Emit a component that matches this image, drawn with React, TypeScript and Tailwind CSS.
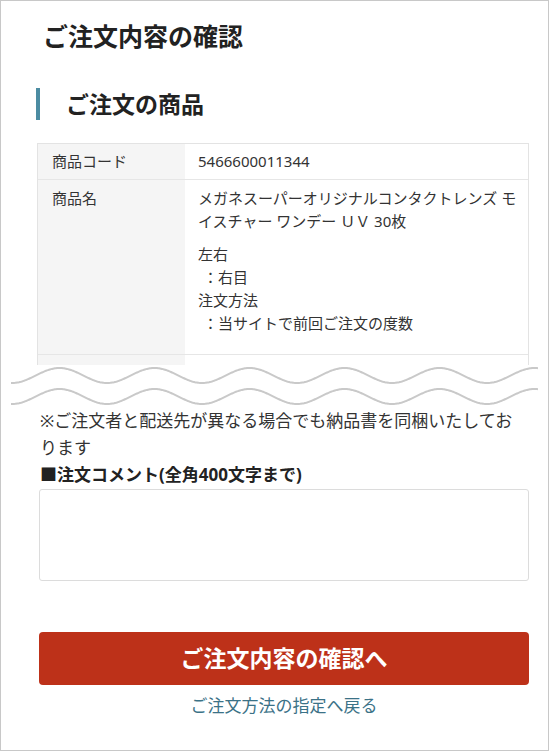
import React from 'react'

const wavePoints = (c: number) => {
  const pts: string[] = []
  for (let x = 0; x <= 527; x += 1) {
    const px = x + 11
    const y = c + 7.5 * Math.cos((2 * Math.PI * (px - 12)) / 95)
    pts.push(`${x},${y.toFixed(2)}`)
  }
  return pts.join(' ')
}

function Wave() {
  return (
    <svg width="527" height="42" viewBox="0 0 527 42" className="block -ml-[26px]">
      <polyline points={wavePoints(10.5)} fill="none" stroke="#c9c9c9" strokeWidth="2" />
      <polyline points={wavePoints(31.5)} fill="none" stroke="#c9c9c9" strokeWidth="2" />
    </svg>
  )
}

export default function App() {
  return (
    <div
      className="w-[549px] h-[751px] border border-[#c8c8c8] bg-white text-[#333]"
      style={{ fontFamily: '"Noto Sans", "Noto Sans CJK JP", sans-serif' }}
    >
      <div className="pl-[36px] pr-[19px]">
        <h1 className="pt-[19px] pl-[6px] text-[25px] leading-[32px] font-bold text-[#222]">
          ご注文内容の確認
        </h1>

        <h2 className="mt-[36px] -ml-[1px] h-[32px] border-l-[4px] border-[#4c8ca2] pl-[26px] text-[23px] leading-[32px] font-bold text-[#222]">
          ご注文の商品
        </h2>

        <div className="mt-[23px] h-[222px] overflow-hidden border-t border-l border-r border-[#e3e3e3] text-[15px] leading-[23px]">
          <div className="flex border-b border-[#e6e6e6]">
            <div className="w-[147px] shrink-0 bg-[#f5f5f5] pl-[14px] py-[6px]">商品コード</div>
            <div className="flex-1 pl-[13px] py-[6px]">5466600011344</div>
          </div>
          <div className="flex border-b border-[#e6e6e6]">
            <div className="w-[147px] shrink-0 bg-[#f5f5f5] pl-[14px] pt-[7px]">商品名</div>
            <div className="flex-1 pl-[13px] pr-[8px] pt-[7px] pb-[19px]">
              <p>メガネスーパーオリジナルコンタクトレンズ モイスチャー ワンデー ＵＶ 30枚</p>
              <div className="mt-[10px]">
                <p>左右</p>
                <p className="pl-[5px]">：右目</p>
                <p>注文方法</p>
                <p className="pl-[5px]">：当サイトで前回ご注文の度数</p>
              </div>
            </div>
          </div>
          <div className="flex h-[40px]">
            <div className="w-[147px] shrink-0 bg-[#f5f5f5]"></div>
            <div className="flex-1"></div>
          </div>
        </div>

        <Wave />

        <div className="pl-[3px] text-[17px] leading-[27px]">
          <p>※ご注文者と配送先が異なる場合でも納品書を同梱いたしております</p>
          <p className="font-bold text-[#222]">■注文コメント(全角400文字まで)</p>
        </div>

        <textarea className="mt-[1px] ml-[2px] block w-[490px] h-[92px] rounded-[3px] border border-[#dcdcdc] resize-none outline-none" />

        <button className="mt-[51px] ml-[2px] block w-[490px] h-[53px] rounded-[4px] bg-[#bd3119] text-white text-[23px] font-bold leading-[53px] text-center">
          ご注文内容の確認へ
        </button>

        <div className="mt-[7px] text-center text-[17px] leading-[27px] text-[#3b7287] pl-[2px]">
          <a href="#">ご注文方法の指定へ戻る</a>
        </div>
      </div>
    </div>
  )
}
